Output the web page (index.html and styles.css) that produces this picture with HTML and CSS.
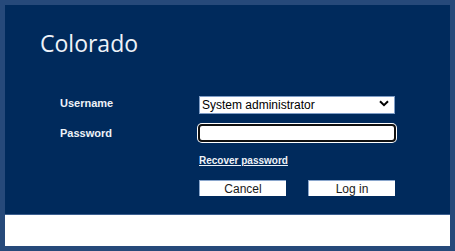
FILE: index.html
```html
<!DOCTYPE html>
<html>
<head>
<meta charset="utf-8">
<link rel="stylesheet" href="styles.css">
</head>
<body>
<div class="frame">
  <div class="panel">
    <h1 class="title">Colorado</h1>
    <form class="form">
      <label class="label" for="user">Username</label>
      <div class="select-wrap">
        <select id="user" class="select">
          <option>System administrator</option>
        </select>
        <svg class="chevron" width="10" height="7" viewBox="0 0 10 7"><path d="M1 1.2 L5 5.2 L9 1.2" fill="none" stroke="#000" stroke-width="2"/></svg>
      </div>
      <label class="label" for="pass">Password</label>
      <input id="pass" class="input" type="password">
      <span></span>
      <a class="link" href="#">Recover password</a>
      <span></span>
      <div class="buttons">
        <button type="button" class="btn">Cancel</button>
        <button type="button" class="btn">Log in</button>
      </div>
    </form>
  </div>
  <div class="footer"></div>
</div>
</body>
</html>
```

FILE: styles.css
```css
html, body {
  margin: 0;
  padding: 0;
}
body {
  width: 455px;
  height: 251px;
  overflow: hidden;
  background: #26497a;
  font-family: "DejaVu Sans", sans-serif;
}
.frame {
  box-sizing: border-box;
  width: 455px;
  height: 251px;
  padding: 5px;
  display: flex;
  flex-direction: column;
}
.panel {
  height: 210px;
  background: #002a5c;
  box-sizing: border-box;
  padding-top: 24px;
  border-bottom: 1px solid #3c5f8f;
}
.title {
  margin: 0 0 0 35px;
  font-family: "Open Sans", sans-serif;
  font-weight: 400;
  font-size: 23px;
  line-height: 28px;
  color: #eef2f8;
}
.form {
  margin: 37px 0 0 55px;
  display: grid;
  grid-template-columns: 139px 197px;
  grid-template-rows: 18px 18px 14px 16px;
  row-gap: 12px;
  align-items: center;
}
.label {
  font-family: "Liberation Sans", sans-serif;
  font-weight: 700;
  font-size: 11px;
  color: #eef2f8;
}
.select-wrap {
  position: relative;
  width: 196px;
  height: 18px;
}
.select {
  appearance: none;
  -webkit-appearance: none;
  box-sizing: border-box;
  width: 196px;
  height: 18px;
  margin: 0;
  padding: 0 0 0 2px;
  border: 1px solid #7f9dc6;
  border-radius: 0;
  background: #fff;
  font-family: "Liberation Sans", sans-serif;
  font-size: 12px;
  color: #000;
  outline: none;
}
.chevron {
  position: absolute;
  right: 6px;
  top: 6px;
  pointer-events: none;
}
.input {
  box-sizing: border-box;
  width: 198px;
  height: 18px;
  margin: 0 0 0 -1px;
  border: 2px solid #111;
  border-radius: 4px;
  background: #fff;
  box-shadow: 0 0 0 1px #ffffff;
  outline: none;
}
.link {
  font-family: "Liberation Sans", sans-serif;
  font-weight: 700;
  font-size: 10px;
  line-height: 14px;
  color: #eef2f8;
  text-decoration: underline;
}
.buttons {
  display: flex;
  gap: 22px;
}
.btn {
  box-sizing: border-box;
  width: 87px;
  height: 16px;
  margin: 0;
  padding: 0;
  border: none;
  border-top: 1px solid #8aa6cc;
  border-left: 1px solid #8aa6cc;
  background: #fff;
  font-family: "Liberation Sans", sans-serif;
  font-size: 12px;
  line-height: 14px;
  color: #1a1a1a;
}
.footer {
  flex: 1;
  background: #fff;
}
```
